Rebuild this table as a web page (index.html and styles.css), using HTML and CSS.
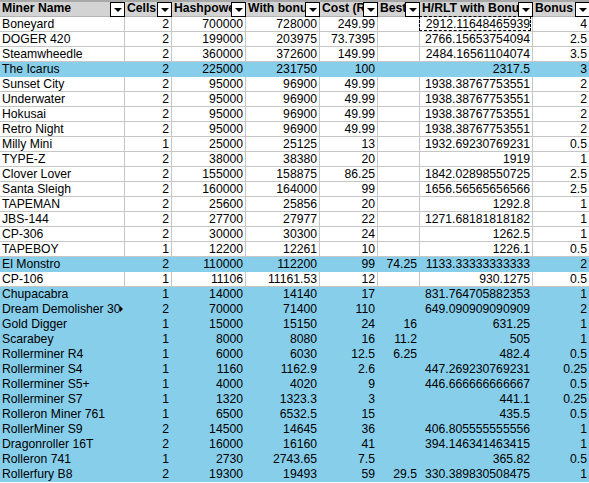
FILE: index.html
```html
<!DOCTYPE html>
<html lang="en">
<head>
  <meta charset="UTF-8">
  <title>Miners</title>
  <link rel="stylesheet" href="styles.css">
</head>
<body>
  <div class="sheet">
    <div class="row head">
      <div class="c c1"><span class="lbl">Miner Name</span><span class="btn"></span></div>
      <div class="c c2"><span class="lbl">Cells</span><span class="btn"></span></div>
      <div class="c c3"><span class="lbl">Hashpower</span><span class="btn"></span></div>
      <div class="c c4"><span class="lbl">With bonus</span><span class="btn"></span></div>
      <div class="c c5"><span class="lbl">Cost (RLT)</span><span class="btn"></span></div>
      <div class="c c6"><span class="lbl">Best price</span><span class="btn"></span></div>
      <div class="c c7"><span class="lbl">H/RLT with Bonus</span><span class="btn"></span></div>
      <div class="c c8"><span class="lbl">Bonus</span><span class="btn"></span></div>
    </div>

    <div class="row"><div class="c c1">Boneyard</div><div class="c c2 n">2</div><div class="c c3 n">700000</div><div class="c c4 n">728000</div><div class="c c5 n">249.99</div><div class="c c6 n"></div><div class="c c7 n marquee">2912.11648465939</div><div class="c c8 n">4</div></div>
    <div class="row"><div class="c c1">DOGER 420</div><div class="c c2 n">2</div><div class="c c3 n">199000</div><div class="c c4 n">203975</div><div class="c c5 n">73.7395</div><div class="c c6 n"></div><div class="c c7 n">2766.15653754094</div><div class="c c8 n">2.5</div></div>
    <div class="row"><div class="c c1">Steamwheedle</div><div class="c c2 n">2</div><div class="c c3 n">360000</div><div class="c c4 n">372600</div><div class="c c5 n">149.99</div><div class="c c6 n"></div><div class="c c7 n">2484.16561104074</div><div class="c c8 n">3.5</div></div>
    <div class="row blue"><div class="c c1">The Icarus</div><div class="c c2 n">2</div><div class="c c3 n">225000</div><div class="c c4 n">231750</div><div class="c c5 n">100</div><div class="c c6 n"></div><div class="c c7 n">2317.5</div><div class="c c8 n">3</div></div>
    <div class="row"><div class="c c1">Sunset City</div><div class="c c2 n">2</div><div class="c c3 n">95000</div><div class="c c4 n">96900</div><div class="c c5 n">49.99</div><div class="c c6 n"></div><div class="c c7 n">1938.38767753551</div><div class="c c8 n">2</div></div>
    <div class="row"><div class="c c1">Underwater</div><div class="c c2 n">2</div><div class="c c3 n">95000</div><div class="c c4 n">96900</div><div class="c c5 n">49.99</div><div class="c c6 n"></div><div class="c c7 n">1938.38767753551</div><div class="c c8 n">2</div></div>
    <div class="row"><div class="c c1">Hokusai</div><div class="c c2 n">2</div><div class="c c3 n">95000</div><div class="c c4 n">96900</div><div class="c c5 n">49.99</div><div class="c c6 n"></div><div class="c c7 n">1938.38767753551</div><div class="c c8 n">2</div></div>
    <div class="row"><div class="c c1">Retro Night</div><div class="c c2 n">2</div><div class="c c3 n">95000</div><div class="c c4 n">96900</div><div class="c c5 n">49.99</div><div class="c c6 n"></div><div class="c c7 n">1938.38767753551</div><div class="c c8 n">2</div></div>
    <div class="row"><div class="c c1">Milly Mini</div><div class="c c2 n">1</div><div class="c c3 n">25000</div><div class="c c4 n">25125</div><div class="c c5 n">13</div><div class="c c6 n"></div><div class="c c7 n">1932.69230769231</div><div class="c c8 n">0.5</div></div>
    <div class="row"><div class="c c1">TYPE-Z</div><div class="c c2 n">2</div><div class="c c3 n">38000</div><div class="c c4 n">38380</div><div class="c c5 n">20</div><div class="c c6 n"></div><div class="c c7 n">1919</div><div class="c c8 n">1</div></div>
    <div class="row"><div class="c c1">Clover Lover</div><div class="c c2 n">2</div><div class="c c3 n">155000</div><div class="c c4 n">158875</div><div class="c c5 n">86.25</div><div class="c c6 n"></div><div class="c c7 n">1842.02898550725</div><div class="c c8 n">2.5</div></div>
    <div class="row"><div class="c c1">Santa Sleigh</div><div class="c c2 n">2</div><div class="c c3 n">160000</div><div class="c c4 n">164000</div><div class="c c5 n">99</div><div class="c c6 n"></div><div class="c c7 n">1656.56565656566</div><div class="c c8 n">2.5</div></div>
    <div class="row"><div class="c c1">TAPEMAN</div><div class="c c2 n">2</div><div class="c c3 n">25600</div><div class="c c4 n">25856</div><div class="c c5 n">20</div><div class="c c6 n"></div><div class="c c7 n">1292.8</div><div class="c c8 n">1</div></div>
    <div class="row"><div class="c c1">JBS-144</div><div class="c c2 n">2</div><div class="c c3 n">27700</div><div class="c c4 n">27977</div><div class="c c5 n">22</div><div class="c c6 n"></div><div class="c c7 n">1271.68181818182</div><div class="c c8 n">1</div></div>
    <div class="row"><div class="c c1">CP-306</div><div class="c c2 n">2</div><div class="c c3 n">30000</div><div class="c c4 n">30300</div><div class="c c5 n">24</div><div class="c c6 n"></div><div class="c c7 n">1262.5</div><div class="c c8 n">1</div></div>
    <div class="row"><div class="c c1">TAPEBOY</div><div class="c c2 n">1</div><div class="c c3 n">12200</div><div class="c c4 n">12261</div><div class="c c5 n">10</div><div class="c c6 n"></div><div class="c c7 n">1226.1</div><div class="c c8 n">0.5</div></div>
    <div class="row blue"><div class="c c1">El Monstro</div><div class="c c2 n">2</div><div class="c c3 n">110000</div><div class="c c4 n">112200</div><div class="c c5 n">99</div><div class="c c6 n">74.25</div><div class="c c7 n">1133.33333333333</div><div class="c c8 n">2</div></div>
    <div class="row"><div class="c c1">CP-106</div><div class="c c2 n">1</div><div class="c c3 n">11106</div><div class="c c4 n">11161.53</div><div class="c c5 n">12</div><div class="c c6 n"></div><div class="c c7 n">930.1275</div><div class="c c8 n">0.5</div></div>
    <div class="row blue"><div class="c c1">Chupacabra</div><div class="c c2 n">1</div><div class="c c3 n">14000</div><div class="c c4 n">14140</div><div class="c c5 n">17</div><div class="c c6 n"></div><div class="c c7 n">831.764705882353</div><div class="c c8 n">1</div></div>
    <div class="row blue"><div class="c c1 clip">Dream Demolisher 30</div><div class="c c2 n">2</div><div class="c c3 n">70000</div><div class="c c4 n">71400</div><div class="c c5 n">110</div><div class="c c6 n"></div><div class="c c7 n">649.090909090909</div><div class="c c8 n">2</div></div>
    <div class="row blue"><div class="c c1">Gold Digger</div><div class="c c2 n">1</div><div class="c c3 n">15000</div><div class="c c4 n">15150</div><div class="c c5 n">24</div><div class="c c6 n">16</div><div class="c c7 n">631.25</div><div class="c c8 n">1</div></div>
    <div class="row blue"><div class="c c1">Scarabey</div><div class="c c2 n">1</div><div class="c c3 n">8000</div><div class="c c4 n">8080</div><div class="c c5 n">16</div><div class="c c6 n">11.2</div><div class="c c7 n">505</div><div class="c c8 n">1</div></div>
    <div class="row blue"><div class="c c1">Rollerminer R4</div><div class="c c2 n">1</div><div class="c c3 n">6000</div><div class="c c4 n">6030</div><div class="c c5 n">12.5</div><div class="c c6 n">6.25</div><div class="c c7 n">482.4</div><div class="c c8 n">0.5</div></div>
    <div class="row blue"><div class="c c1">Rollerminer S4</div><div class="c c2 n">1</div><div class="c c3 n">1160</div><div class="c c4 n">1162.9</div><div class="c c5 n">2.6</div><div class="c c6 n"></div><div class="c c7 n">447.269230769231</div><div class="c c8 n">0.25</div></div>
    <div class="row blue"><div class="c c1">Rollerminer S5+</div><div class="c c2 n">1</div><div class="c c3 n">4000</div><div class="c c4 n">4020</div><div class="c c5 n">9</div><div class="c c6 n"></div><div class="c c7 n">446.666666666667</div><div class="c c8 n">0.5</div></div>
    <div class="row blue"><div class="c c1">Rollerminer S7</div><div class="c c2 n">1</div><div class="c c3 n">1320</div><div class="c c4 n">1323.3</div><div class="c c5 n">3</div><div class="c c6 n"></div><div class="c c7 n">441.1</div><div class="c c8 n">0.25</div></div>
    <div class="row blue"><div class="c c1">Rolleron Miner 761</div><div class="c c2 n">1</div><div class="c c3 n">6500</div><div class="c c4 n">6532.5</div><div class="c c5 n">15</div><div class="c c6 n"></div><div class="c c7 n">435.5</div><div class="c c8 n">0.5</div></div>
    <div class="row blue"><div class="c c1">RollerMiner S9</div><div class="c c2 n">2</div><div class="c c3 n">14500</div><div class="c c4 n">14645</div><div class="c c5 n">36</div><div class="c c6 n"></div><div class="c c7 n">406.805555555556</div><div class="c c8 n">1</div></div>
    <div class="row blue"><div class="c c1">Dragonroller 16T</div><div class="c c2 n">2</div><div class="c c3 n">16000</div><div class="c c4 n">16160</div><div class="c c5 n">41</div><div class="c c6 n"></div><div class="c c7 n">394.146341463415</div><div class="c c8 n">1</div></div>
    <div class="row blue"><div class="c c1">Rolleron 741</div><div class="c c2 n">1</div><div class="c c3 n">2730</div><div class="c c4 n">2743.65</div><div class="c c5 n">7.5</div><div class="c c6 n"></div><div class="c c7 n">365.82</div><div class="c c8 n">0.5</div></div>
    <div class="row blue"><div class="c c1">Rollerfury B8</div><div class="c c2 n">2</div><div class="c c3 n">19300</div><div class="c c4 n">19493</div><div class="c c5 n">59</div><div class="c c6 n">29.5</div><div class="c c7 n">330.389830508475</div><div class="c c8 n">1</div></div>
  </div>
</body>
</html>
```

FILE: styles.css
```css
* {
  margin: 0;
  padding: 0;
  box-sizing: border-box;
}

body {
  background: #fff;
  font-family: "Liberation Sans", Arial, sans-serif;
  font-size: 12.2px;
  color: #000;
  overflow: hidden;
}

.sheet {
  width: 589px;
}

.row {
  display: flex;
  height: 15px;
}

.c {
  position: relative;
  flex: none;
  height: 15px;
  line-height: 14px;
  padding: 0 2px;
  border-right: 1px solid #c6c6c6;
  border-bottom: 1px solid #c6c6c6;
  white-space: nowrap;
  overflow: hidden;
}

.c.n {
  text-align: right;
}

.c1 { width: 125px; }
.c2 { width: 47px; }
.c3 { width: 74px; }
.c4 { width: 74px; }
.c5 { width: 58px; }
.c6 { width: 42px; }
.c7 { width: 113px; }
.c8 { width: 57px; }

.head {
  height: 17px;
}

.head .c {
  height: 17px;
  line-height: 16px;
  padding: 0;
  font-weight: 700;
  background: #d3d3d3;
  border-color: #b4b4b4;
  box-shadow: inset 0 2px 0 #a8a8a8;
  overflow: visible;
}

.lbl {
  display: block;
  margin-right: 14px;
  padding-left: 2px;
  overflow: hidden;
}

.btn {
  position: absolute;
  top: 2px;
  right: -1px;
  width: 15px;
  height: 15px;
  background: #fff;
  border: 1px solid #000;
}

.btn::after {
  content: "";
  position: absolute;
  left: 3px;
  top: 5px;
  border-left: 4px solid transparent;
  border-right: 4px solid transparent;
  border-top: 4px solid #000;
}

.blue .c {
  background: #87ceeb;
  border-color: #87ceeb;
}

.marquee {
  overflow: visible;
}

.marquee::after {
  content: "";
  position: absolute;
  left: -1px;
  top: -1px;
  right: 1px;
  bottom: 0;
  border: 1px dashed #000;
}

.clip {
  padding-right: 5px;
}

.clip::after {
  content: "";
  position: absolute;
  right: 1px;
  top: 4px;
  border-top: 3px solid transparent;
  border-bottom: 3px solid transparent;
  border-left: 3px solid #000;
}
```
